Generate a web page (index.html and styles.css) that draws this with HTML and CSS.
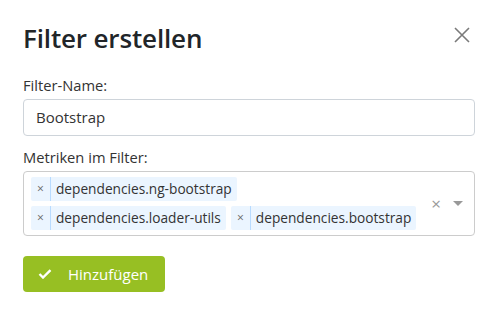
FILE: index.html
```html
<!DOCTYPE html>
<html lang="de">
<head>
<meta charset="utf-8">
<title>Filter erstellen</title>
<link rel="stylesheet" href="styles.css">
</head>
<body>
<div class="modal">
  <div class="modal-header">
    <h5 class="modal-title">Filter erstellen</h5>
    <button class="close" aria-label="Close">
      <svg width="16" height="16" viewBox="0 0 16 16"><path d="M1 1L15 15M15 1L1 15" stroke="#7a7a7a" stroke-width="1.6" fill="none"/></svg>
    </button>
  </div>
  <div class="modal-body">
    <label class="label">Filter-Name:</label>
    <div class="input">Bootstrap</div>
    <label class="label label-2">Metriken im Filter:</label>
    <div class="select">
      <div class="tags">
        <span class="tag"><span class="tag-x">×</span><span class="tag-text">dependencies.ng-bootstrap</span></span>
        <span class="tag"><span class="tag-x">×</span><span class="tag-text">dependencies.loader-utils</span></span>
        <span class="tag"><span class="tag-x">×</span><span class="tag-text">dependencies.bootstrap</span></span>
      </div>
      <span class="clear">×</span>
      <span class="arrow"></span>
    </div>
  </div>
  <div class="modal-footer">
    <button class="btn">
      <svg width="14" height="10" viewBox="0 0 14 10"><path d="M1.5 5L5 8.5L12.5 1.2" stroke="#fff" stroke-width="2.4" fill="none"/></svg>
      <span>Hinzufügen</span>
    </button>
  </div>
</div>
</body>
</html>
```
FILE: styles.css
```css
html, body {
  margin: 0;
  padding: 0;
  background: #fff;
}
body {
  font-family: "Open Sans", "Noto Sans", sans-serif;
  color: #333;
}
.modal {
  width: 499px;
  height: 316px;
  box-sizing: border-box;
  padding: 0 24px 0 23px;
}
.modal-header {
  display: flex;
  justify-content: space-between;
  align-items: flex-start;
  padding-top: 22px;
}
.modal-title {
  margin: 0;
  font-size: 26px;
  font-weight: 600;
  letter-spacing: -0.15px;
  line-height: 32px;
  color: #212529;
}
.close {
  border: 0;
  background: none;
  padding: 0;
  margin: 5px 5px 0 0;
  width: 16px;
  height: 16px;
  cursor: pointer;
}
.close svg { display: block; }
.modal-body {
  padding-top: 21px;
  display: flex;
  flex-direction: column;
}
.label {
  font-size: 14.7px;
  line-height: 20px;
  color: #333;
  margin-bottom: 4px;
}
.label-2 {
  margin-top: 11px;
}
.input {
  height: 37px;
  box-sizing: border-box;
  border: 1px solid #ced4da;
  border-radius: 4px;
  padding: 0 12px;
  font-size: 15px;
  line-height: 35px;
  color: #333;
}
.select {
  display: flex;
  align-items: center;
  min-height: 64px;
  box-sizing: border-box;
  border: 1px solid #ccc;
  border-radius: 4px;
  padding: 5px 11px 5px 7px;
}
.tags {
  flex: 1;
  display: flex;
  flex-wrap: wrap;
  gap: 5px 5px;
}
.tag {
  display: inline-flex;
  align-items: stretch;
  height: 24px;
  background: #ebf5ff;
  border-radius: 2px;
  font-size: 13.7px;
  line-height: 24px;
  color: #333;
}
.tag-x {
  width: 19px;
  text-align: center;
  border-right: 1px solid #b8dbff;
  color: #666;
  font-size: 12px;
}
.tag-text {
  padding: 0 5px 0 5px;
}
.clear {
  color: #999;
  font-size: 17px;
  line-height: 17px;
  margin: 0 12px 0 8px;
}
.arrow {
  width: 0;
  height: 0;
  border-style: solid;
  border-width: 5px 5px 0 5px;
  border-color: #999 transparent transparent transparent;
}
.modal-footer {
  padding-top: 20px;
}
.btn {
  display: inline-flex;
  align-items: center;
  gap: 16px;
  height: 36px;
  padding: 0 17px 0 15px;
  border: 0;
  border-radius: 4px;
  background: #97bf23;
  color: #fff;
  font-family: "Open Sans", "Noto Sans", sans-serif;
  font-size: 15px;
}
.btn svg { display: block; }
```
